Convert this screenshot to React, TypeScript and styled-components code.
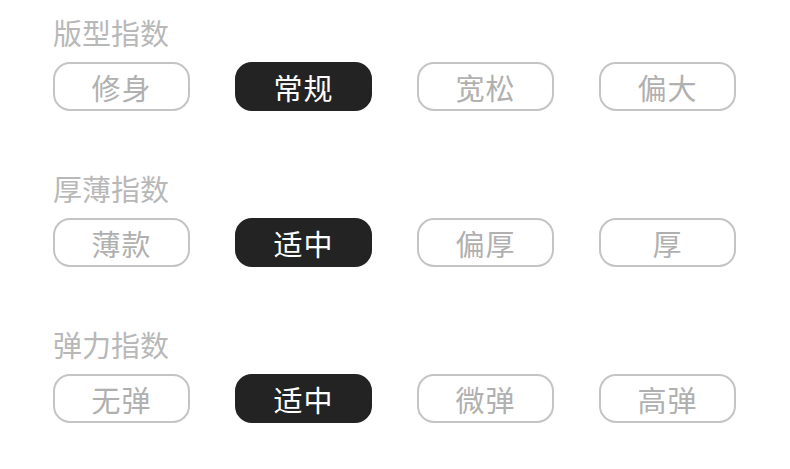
import React from "react";
import styled, { createGlobalStyle } from "styled-components";

const Global = createGlobalStyle`
  html, body { margin: 0; padding: 0; background: #ffffff; }
  body { font-family: "Noto Sans CJK SC", "Noto Sans", sans-serif; }
`;

const Page = styled.div`
  display: flex;
  flex-direction: column;
  gap: 57px;
  padding: 12px 0 0 53px;
  width: 790px;
  height: 469px;
  box-sizing: border-box;
`;

const Section = styled.section`
  display: flex;
  flex-direction: column;
  gap: 10px;
`;

const Title = styled.div`
  font-size: 29px;
  line-height: 40px;
  color: #b8b8b8;
`;

const Options = styled.div`
  display: flex;
  gap: 45px;
`;

const Option = styled.div<{ $active?: boolean }>`
  width: 137px;
  height: 49px;
  box-sizing: border-box;
  border-radius: 17px;
  border: 2px solid ${(p) => (p.$active ? "#232323" : "#c4c4c4")};
  background: ${(p) => (p.$active ? "#232323" : "#ffffff")};
  color: ${(p) => (p.$active ? "#ffffff" : "#b0b0b0")};
  display: flex;
  align-items: center;
  justify-content: center;
  font-size: 29px;
  letter-spacing: 1px;
`;

const groups = [
  { title: "版型指数", options: ["修身", "常规", "宽松", "偏大"], active: 1 },
  { title: "厚薄指数", options: ["薄款", "适中", "偏厚", "厚"], active: 1 },
  { title: "弹力指数", options: ["无弹", "适中", "微弹", "高弹"], active: 1 },
];

export default function App() {
  return (
    <>
      <Global />
      <Page>
        {groups.map((g) => (
          <Section key={g.title}>
            <Title>{g.title}</Title>
            <Options>
              {g.options.map((o, i) => (
                <Option key={o} $active={i === g.active}>
                  {o}
                </Option>
              ))}
            </Options>
          </Section>
        ))}
      </Page>
    </>
  );
}
